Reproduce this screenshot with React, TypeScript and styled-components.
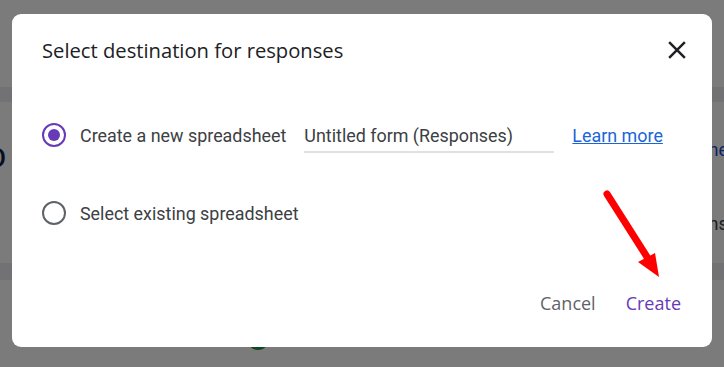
import styled, { createGlobalStyle } from 'styled-components';
import { useState } from 'react';

const GlobalStyle = createGlobalStyle`
  html, body {
    margin: 0;
    padding: 0;
    width: 724px;
    height: 367px;
    overflow: hidden;
    font-family: Roboto, "Noto Sans", Arial, sans-serif;
  }
`

const purple = '#673ab7'
const grey = '#5f6368'

const Screen = styled.div`
    position: relative;
    width: 724px;
    height: 367px;
    overflow: hidden;
    background: #f6f6f6;
`

const Backdrop = styled.div`
    display: flex;
    flex-direction: column;
    padding-top: 87px;
`

const Band = styled.div<{ h: number }>`
    height: ${({ h }) => h}px;
    background: #e4e4ea;
`

const MiddleRow = styled.div`
    display: flex;
    justify-content: space-between;
    height: 161px;
`

const BigLetter = styled.span`
    margin: 41px 0 0 -12px;
    font-size: 26px;
    font-weight: 500;
    color: #0b1f44;
    line-height: 30px;
`

const SideTexts = styled.div`
    display: flex;
    flex-direction: column;
    gap: 50px;
    padding-top: 36px;
    margin-right: -4px;
`

const SideText = styled.span<{ blue?: boolean }>`
    font-size: 18px;
    line-height: 24px;
    color: ${({ blue }) => blue ? '#1a47c8' : '#3c4043'};
`

const BottomRow = styled.div`
    display: flex;
    padding: 48px 0 0 247px;
`

const GreenDot = styled.div`
    width: 22px;
    height: 22px;
    border-radius: 50%;
    background: #1e8e3e;
`

const Overlay = styled.div`
    position: absolute;
    inset: 0;
    background: rgba(0, 0, 0, 0.5);
    display: flex;
    padding: 14px 0 0 12px;
`

const Dialog = styled.div`
    position: relative;
    width: 700px;
    height: 333px;
    box-sizing: border-box;
    background: #fff;
    border-radius: 9px;
    display: flex;
    flex-direction: column;
    padding: 24px 26px 0 30px;
`

const Header = styled.div`
    display: flex;
    align-items: center;
    justify-content: space-between;
    height: 24px;
`

const Title = styled.h2`
    margin: 0;
    font-family: "Open Sans", Roboto, sans-serif;
    font-weight: 400;
    font-size: 20.2px;
    color: #202124;
`

const CloseButton = styled.button`
    display: flex;
    align-items: center;
    justify-content: center;
    width: 30px;
    height: 30px;
    padding: 0;
    border: none;
    background: none;
    color: #202124;
    margin-right: -6px;
`

const Body = styled.div`
    display: flex;
    flex-direction: column;
    gap: 38px;
    margin-top: 53px;
`

const OptionRow = styled.label`
    display: flex;
    align-items: center;
    height: 40px;
`

const Radio = styled.span<{ checked: boolean }>`
    box-sizing: border-box;
    width: 24px;
    height: 24px;
    border-radius: 50%;
    border: 2px solid ${({ checked }) => checked ? purple : grey};
    display: flex;
    align-items: center;
    justify-content: center;
    &::after {
        content: '';
        width: 12px;
        height: 12px;
        border-radius: 50%;
        background: ${({ checked }) => checked ? purple : 'transparent'};
    }
`

const OptionText = styled.span`
    margin-left: 14px;
    font-size: 17.9px;
    color: #3c4043;
`

const NameField = styled.div`
    box-sizing: border-box;
    width: 250px;
    margin-left: 18px;
    height: 36px;
    border-bottom: 2px solid #e0e0e0;
    display: flex;
    align-items: center;
    padding-top: 2px;
    font-size: 17.9px;
    color: #3c4043;
`

const LearnMore = styled.a`
    margin-left: 18px;
    font-size: 17.9px;
    color: #1a65d8;
    text-decoration: underline;
`

const Actions = styled.div`
    display: flex;
    justify-content: flex-end;
    align-items: center;
    gap: 10px;
    margin-top: 52px;
    margin-right: -5px;
`

const ActionButton = styled.button<{ primary?: boolean }>`
    border: none;
    background: none;
    padding: 6px 10px;
    font-family: "Open Sans", Roboto, sans-serif;
    font-size: 18px;
    font-weight: 500;
    color: ${({ primary }) => primary ? purple : grey};
`

const Pointer = styled.svg`
    position: absolute;
    left: 583px;
    top: 171px;
`

export default function App() {

    const [choice, setChoice] = useState<'new' | 'existing'>('new');

    return (
        <Screen>
            <GlobalStyle />
            <Backdrop>
                <Band h={15} />
                <MiddleRow>
                    <BigLetter>O</BigLetter>
                    <SideTexts>
                        <SideText blue>ne</SideText>
                        <SideText>ns</SideText>
                    </SideTexts>
                </MiddleRow>
                <Band h={17} />
                <BottomRow>
                    <GreenDot />
                </BottomRow>
            </Backdrop>

            <Overlay>
                <Dialog>
                    <Header>
                        <Title>Select destination for responses</Title>
                        <CloseButton aria-label='Close'>
                            <svg width='30' height='30' viewBox='0 0 24 24' fill='currentColor'>
                                <path d='M19 6.41L17.59 5 12 10.59 6.41 5 5 6.41 10.59 12 5 17.59 6.41 19 12 13.41 17.59 19 19 17.59 13.41 12z' />
                            </svg>
                        </CloseButton>
                    </Header>

                    <Body>
                        <OptionRow onClick={() => setChoice('new')}>
                            <Radio checked={choice === 'new'} />
                            <OptionText>Create a new spreadsheet</OptionText>
                            <NameField>Untitled form (Responses)</NameField>
                            <LearnMore href='#'>Learn more</LearnMore>
                        </OptionRow>
                        <OptionRow onClick={() => setChoice('existing')}>
                            <Radio checked={choice === 'existing'} />
                            <OptionText>Select existing spreadsheet</OptionText>
                        </OptionRow>
                    </Body>

                    <Actions>
                        <ActionButton>Cancel</ActionButton>
                        <ActionButton primary>Create</ActionButton>
                    </Actions>
                </Dialog>

                {/* red annotation arrow */}
                <Pointer width='100' height='120' viewBox='0 0 100 120'>
                    <line x1='24' y1='23' x2='64' y2='86' stroke='#ff0000' strokeWidth='7' strokeLinecap='round' />
                    <polygon points='55,91 72,82 76,106' fill='#ff0000' />
                </Pointer>
            </Overlay>
        </Screen>
    )
}
